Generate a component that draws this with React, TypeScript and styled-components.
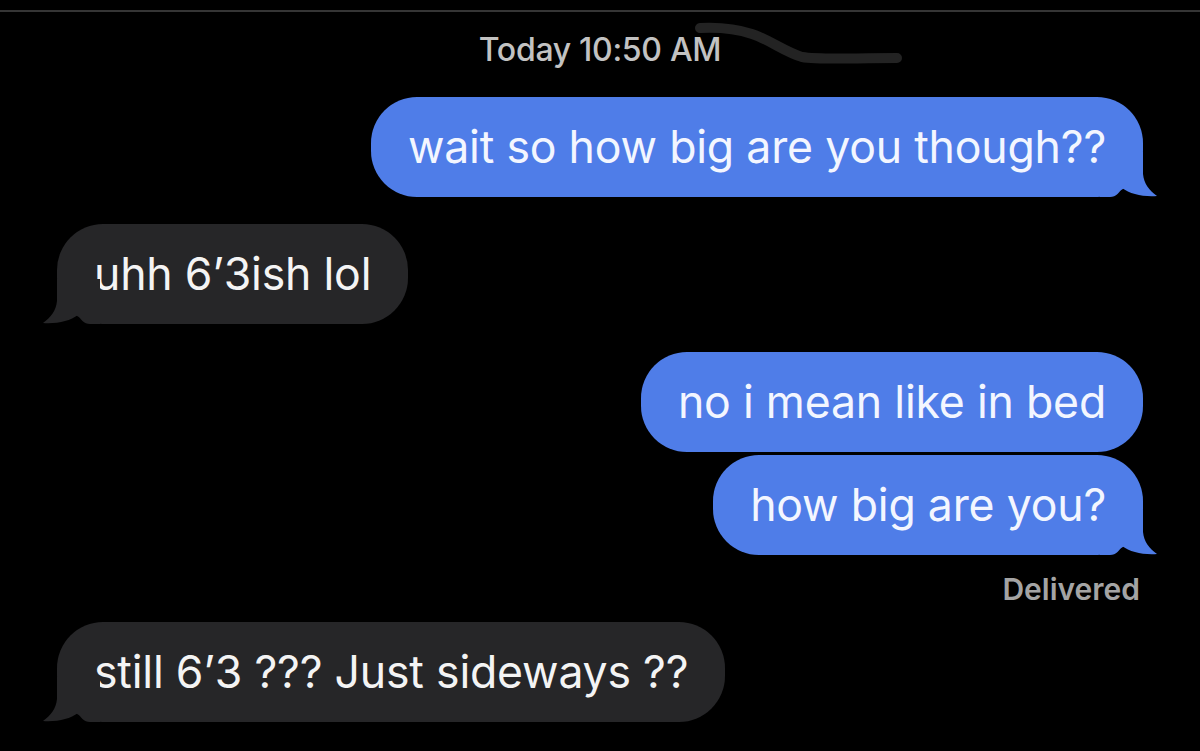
import React from "react";
import styled, { createGlobalStyle } from "styled-components";

const Global = createGlobalStyle`
  html, body {
    margin: 0;
    padding: 0;
    background: #000;
  }
  body {
    font-family: Inter, "Liberation Sans", Arial, sans-serif;
    -webkit-font-smoothing: antialiased;
  }
`;

const Screen = styled.div`
  position: relative;
  width: 1200px;
  height: 751px;
  background: #000;
  overflow: hidden;
  display: flex;
  flex-direction: column;
  padding-top: 10px;
  box-sizing: border-box;
`;

const TopRule = styled.div`
  height: 2px;
  background: #353535;
`;

const Thread = styled.div`
  display: flex;
  flex-direction: column;
  padding: 0 57px;
`;

const Timestamp = styled.div`
  margin-top: 18px;
  text-align: center;
  color: #c2c2c2;
  font-size: 32px;
  line-height: 40px;
  font-weight: 500;
  letter-spacing: -0.3px;
`;

const Row = styled.div<{ $sent?: boolean; $gap: number }>`
  display: flex;
  justify-content: ${(p) => (p.$sent ? "flex-end" : "flex-start")};
  margin-top: ${(p) => p.$gap}px;
`;

const Bubble = styled.div<{ $sent?: boolean }>`
  position: relative;
  height: 100px;
  box-sizing: border-box;
  padding: 22px 37px;
  border-radius: 46px;
  background: ${(p) => (p.$sent ? "#4f7de8" : "#262628")};
  color: ${(p) => (p.$sent ? "#f3f6ff" : "#f4f4f4")};
  font-size: 44.6px;
  line-height: 56px;
  letter-spacing: -0.2px;
  white-space: nowrap;
`;

const Tail = styled.svg<{ $sent?: boolean }>`
  position: absolute;
  bottom: 0;
  width: 58px;
  height: 45px;
  ${(p) => (p.$sent ? "right: -15px;" : "left: -15px; transform: scaleX(-1);")}
`;

const Status = styled.div`
  margin-top: 17px;
  align-self: flex-end;
  margin-right: 3px;
  color: #a4a4a4;
  font-size: 30px;
  line-height: 34px;
  font-weight: 600;
`;

const Scribble = styled.svg`
  position: absolute;
  left: 690px;
  top: 18px;
  width: 220px;
  height: 50px;
`;

const BubbleTail: React.FC<{ sent?: boolean; color: string }> = ({ sent, color }) => (
  <Tail $sent={sent} viewBox="0 0 58 45">
    <path
      d="M0,45 L10,45 C16,45 20,40 22,36 C30,42 43,45 57,44 C49,38 44,32 43,22 L43,0 L0,0 Z"
      fill={color}
    />
  </Tail>
);

const Message: React.FC<{ sent?: boolean; tail?: boolean; gap: number; text: string }> = ({
  sent,
  tail,
  gap,
  text,
}) => (
  <Row $sent={sent} $gap={gap}>
    <Bubble $sent={sent}>
      {tail && <BubbleTail sent={sent} color={sent ? "#4f7de8" : "#262628"} />}
      {text}
    </Bubble>
  </Row>
);

export default function App() {
  return (
    <>
      <Global />
      <Screen>
        <TopRule />
        <Thread>
          <Timestamp>Today 10:50 AM</Timestamp>
          <Message sent tail gap={27} text="wait so how big are you though??" />
          <Message tail gap={27} text="uhh 6’3ish lol" />
          <Message sent gap={28} text="no i mean like in bed" />
          <Message sent tail gap={3} text="how big are you?" />
          <Status>Delivered</Status>
          <Message tail gap={16} text="still 6’3 ??? Just sideways ??" />
        </Thread>
        <Scribble viewBox="0 0 220 50">
          <path
            d="M10,10 C30,9 50,12 62,16 C80,22 95,34 112,39 C130,42 160,40 207,40"
            stroke="#232323"
            strokeWidth="10"
            strokeLinecap="round"
            fill="none"
          />
        </Scribble>
      </Screen>
    </>
  );
}
